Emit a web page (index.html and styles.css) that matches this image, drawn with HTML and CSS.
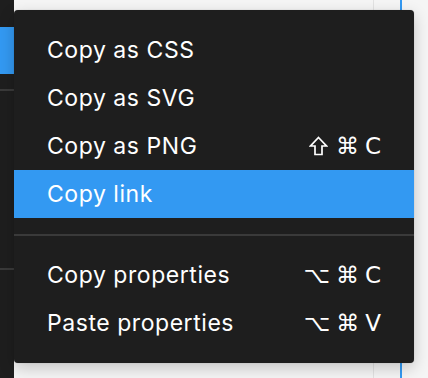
FILE: index.html
```html
<!DOCTYPE html>
<html lang="en">
<head>
  <meta charset="UTF-8">
  <title>Copy menu</title>
  <link rel="stylesheet" href="styles.css">
</head>
<body>

<div class="app">
  <!-- Panel de capas (solo se ve un borde) -->
  <div class="sidebar">
    <div class="layer-top"></div>
    <div class="layer-selected"></div>
    <div class="layer-divider"></div>
    <div class="layer-gap"></div>
    <div class="layer-divider"></div>
  </div>

  <!-- Lienzo -->
  <div class="canvas">
    <div class="frame-line"></div>
    <div class="select-line"></div>
  </div>

  <!-- Menú contextual -->
  <ul class="menu">
    <li class="item"><span>Copy as CSS</span></li>
    <li class="item"><span>Copy as SVG</span></li>
    <li class="item">
      <span>Copy as PNG</span>
      <span class="keys">
        <svg class="shift" width="19" height="20" viewBox="0 0 19 20"><path d="M9.5 1.5 L17.5 10 H13 V18.5 H6 V10 H1.5 Z" fill="none" stroke="#fff" stroke-width="1.7" stroke-linejoin="miter"/></svg>
        <i>⌘</i><i>C</i>
      </span>
    </li>
    <li class="item active"><span>Copy link</span></li>
    <li class="sep"></li>
    <li class="item"><span>Copy properties</span><span class="keys"><i>⌥</i><i>⌘</i><i>C</i></span></li>
    <li class="item"><span>Paste properties</span><span class="keys"><i>⌥</i><i>⌘</i><i>V</i></span></li>
  </ul>
</div>

</body>
</html>
```

FILE: styles.css
```css
body {
  margin: 0;
  background-color: #f4f4f4;
  font-family: Inter, "Noto Sans", sans-serif;
}

.app {
  position: relative;
  display: grid;
  grid-template-columns: 14px 1fr;
  width: 428px;
  height: 378px;
  overflow: hidden;
}

/* Panel izquierdo */
.sidebar {
  background-color: #1e1e1e;
  display: flex;
  flex-direction: column;
}

.layer-top {
  height: 27px;
}

.layer-selected {
  height: 47px;
  background-color: #3399f2;
}

.layer-gap {
  height: 162px;
}

.layer-divider {
  margin-top: 15px;
  height: 2px;
  background-color: #3a3a3a;
}

/* Lienzo */
.canvas {
  position: relative;
  background-color: #f5f5f5;
}

.frame-line {
  position: absolute;
  left: 359px;
  top: 0;
  bottom: 0;
  width: 1px;
  background-color: #e2e2e2;
}

.select-line {
  position: absolute;
  left: 386px;
  top: 0;
  bottom: 0;
  width: 2px;
  background-color: #3399f2;
}

/* Menú */
.menu {
  position: absolute;
  left: 14px;
  top: 10px;
  width: 400px;
  margin: 0;
  padding: 16px 0;
  list-style: none;
  background-color: #1e1e1e;
  border-radius: 4px;
  box-shadow: 0 5px 16px rgba(0, 0, 0, 0.2), 0 0 1px rgba(0, 0, 0, 0.3);
  color: #fff;
}

.item {
  display: flex;
  justify-content: space-between;
  align-items: center;
  height: 48px;
  padding: 0 33px;
  font-size: 23px;
  letter-spacing: 0.55px;
}

.item.active {
  background-color: #3399f2;
}

.keys {
  display: flex;
  align-items: center;
  gap: 6px;
  font-family: "DejaVu Sans", sans-serif;
  font-size: 23px;
  letter-spacing: 0;
}

.keys i {
  font-style: normal;
}

.shift {
  display: block;
  margin-right: 2px;
}

.sep {
  height: 2px;
  margin: 16px 0 15px;
  background-color: #3a3a3a;
}
```
